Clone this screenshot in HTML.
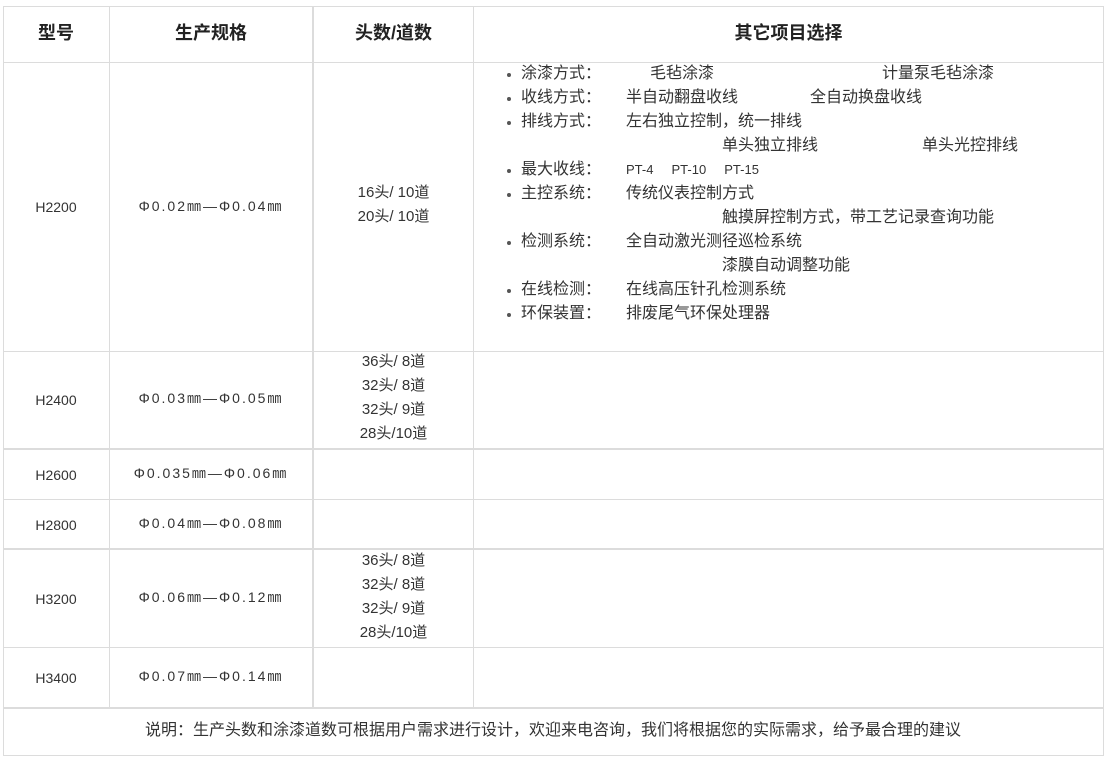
<!DOCTYPE html>
<html><head><meta charset="utf-8"><style>
body{margin:0;width:1109px;height:769px;background:#fff;position:relative;overflow:hidden;font-family:"Liberation Sans","Noto Sans CJK SC",sans-serif;color:#333;font-size:16px}
.h,.v{position:absolute;background:#dcdcdc}
.h{height:1px;left:3px;width:1101px}
.v{width:1px;top:6px;height:750px}
.t{position:absolute;white-space:nowrap;line-height:24px}
.c{position:absolute;text-align:center;line-height:24px;white-space:nowrap}
.hd{font-weight:bold;font-size:18px;color:#222}
.b{position:absolute;width:4px;height:4px;border-radius:50%;background:#555}
.m{font-size:14px;letter-spacing:2px}
.n{font-size:14px}
.k{font-size:15px}
</style></head><body>
<div class="h" style="top:6px"></div>
<div class="h" style="top:62px"></div>
<div class="h" style="top:351px"></div>
<div class="h" style="top:448px;height:2px"></div>
<div class="h" style="top:499px"></div>
<div class="h" style="top:548px;height:2px"></div>
<div class="h" style="top:647px"></div>
<div class="h" style="top:707px;height:2px"></div>
<div class="h" style="top:755px"></div>
<div class="v" style="left:3px"></div>
<div class="v" style="left:109px;height:702px"></div>
<div class="v" style="left:312px;width:2px;height:702px"></div>
<div class="v" style="left:473px;height:702px"></div>
<div class="v" style="left:1103px"></div>

<div class="c hd" style="left:3px;width:106px;top:21px">型号</div>
<div class="c hd" style="left:110px;width:202px;top:21px">生产规格</div>
<div class="c hd" style="left:314px;width:159px;top:21px">头数/道数</div>
<div class="c hd" style="left:474px;width:629px;top:21px">其它项目选择</div>

<div class="c n" style="left:3px;width:106px;top:195px">H2200</div>
<div class="c m" style="left:110px;width:202px;top:194px">Φ0.02㎜—Φ0.04㎜</div>
<div class="c k" style="left:314px;width:159px;top:181px">16头/ 10道<br>20头/ 10道</div>

<div class="c n" style="left:3px;width:106px;top:388px">H2400</div>
<div class="c m" style="left:110px;width:202px;top:386px">Φ0.03㎜—Φ0.05㎜</div>
<div class="c k" style="left:314px;width:159px;top:350px">36头/ 8道<br>32头/ 8道<br>32头/ 9道<br>28头/10道</div>

<div class="c n" style="left:3px;width:106px;top:463px">H2600</div>
<div class="c m" style="left:110px;width:202px;top:461px">Φ0.035㎜—Φ0.06㎜</div>
<div class="c n" style="left:3px;width:106px;top:513px">H2800</div>
<div class="c m" style="left:110px;width:202px;top:511px">Φ0.04㎜—Φ0.08㎜</div>

<div class="c n" style="left:3px;width:106px;top:587px">H3200</div>
<div class="c m" style="left:110px;width:202px;top:585px">Φ0.06㎜—Φ0.12㎜</div>
<div class="c k" style="left:314px;width:159px;top:549px">36头/ 8道<br>32头/ 8道<br>32头/ 9道<br>28头/10道</div>

<div class="c n" style="left:3px;width:106px;top:666px">H3400</div>
<div class="c m" style="left:110px;width:202px;top:664px">Φ0.07㎜—Φ0.14㎜</div>

<div class="c" style="left:3px;width:1100px;top:719px">说明：生产头数和涂漆道数可根据用户需求进行设计，欢迎来电咨询，我们将根据您的实际需求，给予最合理的建议</div>

<div class="b" style="left:507px;top:73px"></div><div class="t" style="left:521px;top:62px">涂漆方式：</div><div class="t" style="left:650px;top:62px">毛毡涂漆</div><div class="t" style="left:882px;top:62px">计量泵毛毡涂漆</div>
<div class="b" style="left:507px;top:97px"></div><div class="t" style="left:521px;top:86px">收线方式：</div><div class="t" style="left:626px;top:86px">半自动翻盘收线</div><div class="t" style="left:810px;top:86px">全自动换盘收线</div>
<div class="b" style="left:507px;top:121px"></div><div class="t" style="left:521px;top:110px">排线方式：</div><div class="t" style="left:626px;top:110px">左右独立控制，统一排线</div>
<div class="t" style="left:722px;top:134px">单头独立排线</div><div class="t" style="left:922px;top:134px">单头光控排线</div>
<div class="b" style="left:507px;top:169px"></div><div class="t" style="left:521px;top:158px">最大收线：</div><div class="t" style="left:626px;top:158px;font-size:13px">PT-4&nbsp;&nbsp;&nbsp;&nbsp;&nbsp;PT-10&nbsp;&nbsp;&nbsp;&nbsp;&nbsp;PT-15</div>
<div class="b" style="left:507px;top:193px"></div><div class="t" style="left:521px;top:182px">主控系统：</div><div class="t" style="left:626px;top:182px">传统仪表控制方式</div>
<div class="t" style="left:722px;top:206px">触摸屏控制方式，带工艺记录查询功能</div>
<div class="b" style="left:507px;top:241px"></div><div class="t" style="left:521px;top:230px">检测系统：</div><div class="t" style="left:626px;top:230px">全自动激光测径巡检系统</div>
<div class="t" style="left:722px;top:254px">漆膜自动调整功能</div>
<div class="b" style="left:507px;top:289px"></div><div class="t" style="left:521px;top:278px">在线检测：</div><div class="t" style="left:626px;top:278px">在线高压针孔检测系统</div>
<div class="b" style="left:507px;top:313px"></div><div class="t" style="left:521px;top:302px">环保装置：</div><div class="t" style="left:626px;top:302px">排废尾气环保处理器</div>
</body></html>
